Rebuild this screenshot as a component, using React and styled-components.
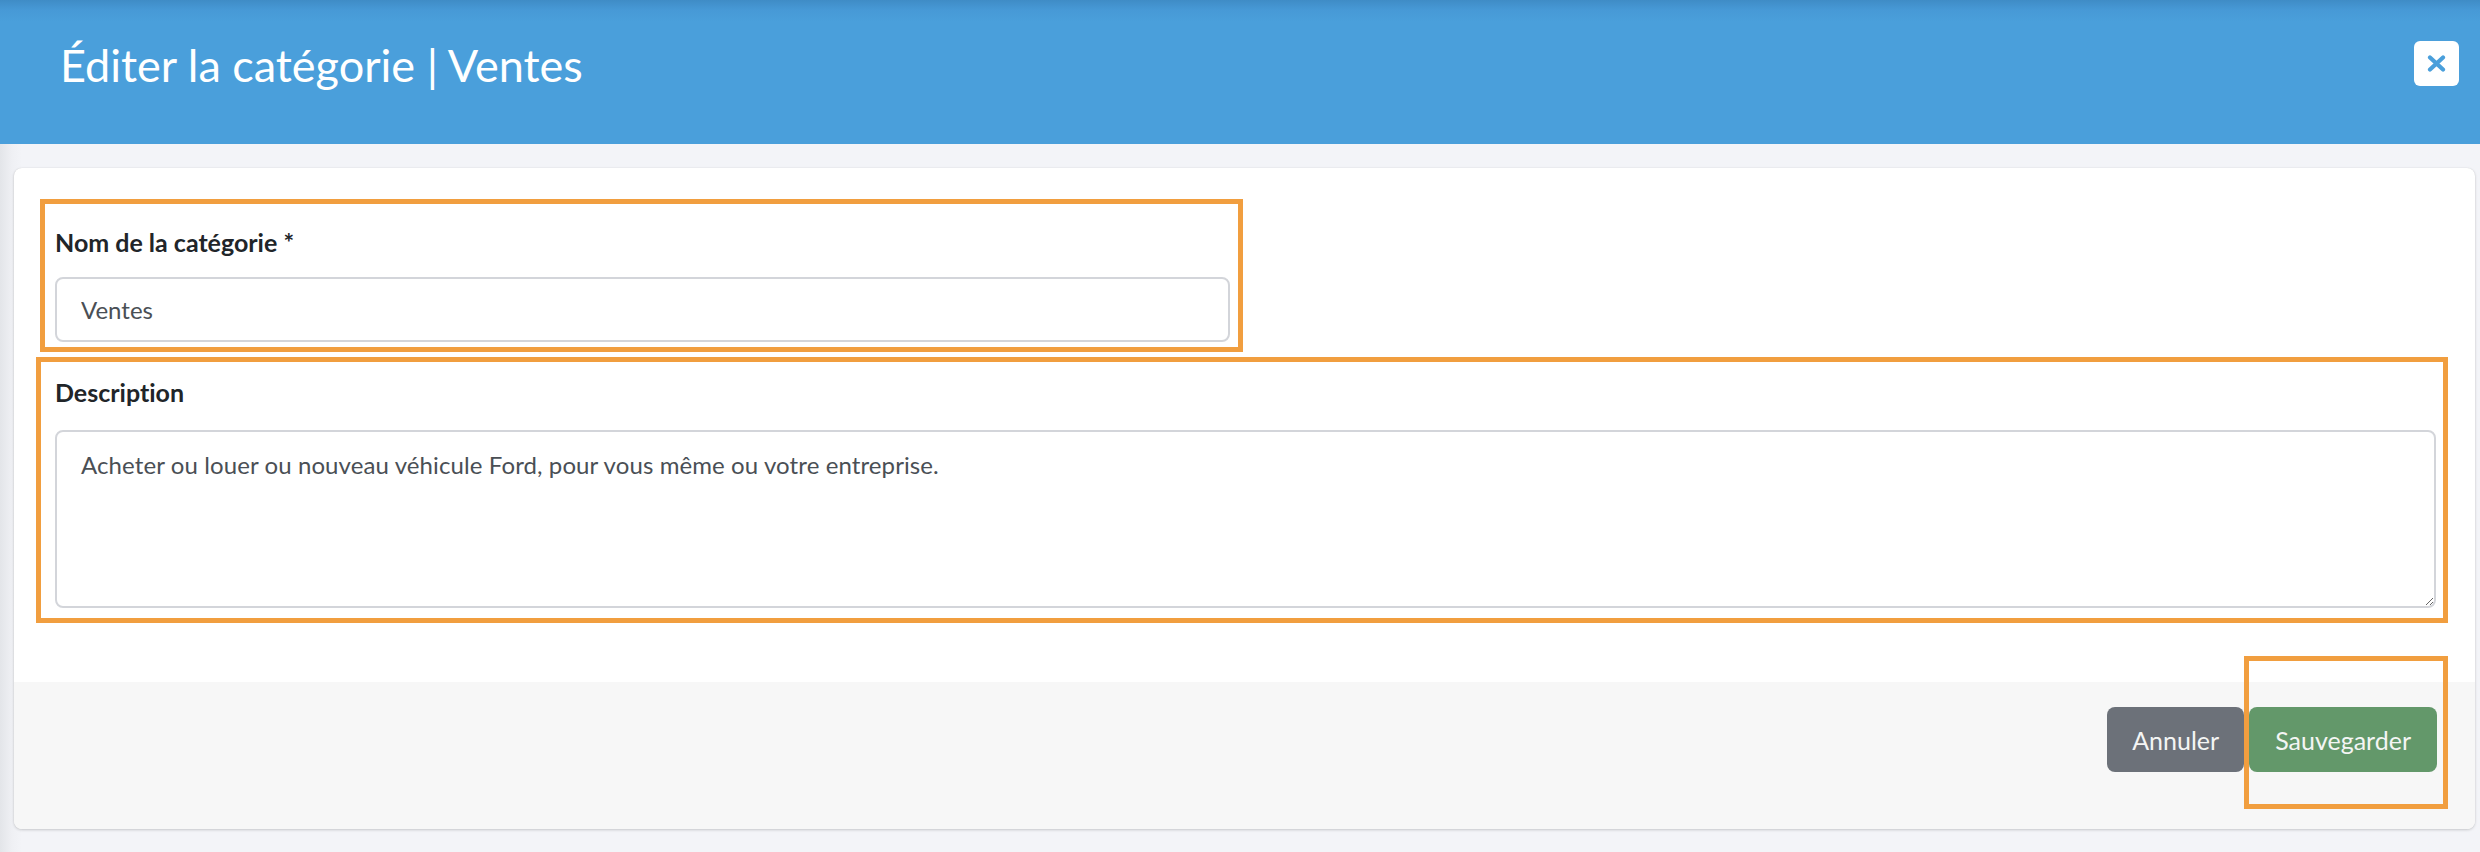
import React from "react";
import styled, { createGlobalStyle } from "styled-components";

const Global = createGlobalStyle`
  html, body { margin: 0; padding: 0; }
  body {
    background: #f3f4f8;
    font-family: Lato, "Open Sans", "Liberation Sans", sans-serif;
    color: #212529;
    font-variant-ligatures: none;
  }
  * { box-sizing: border-box; }
  input, textarea, button { font-variant-ligatures: none; }
`;

const Page = styled.div`
  width: 2480px;
  height: 852px;
  background: linear-gradient(90deg, #e3e5e9 0px, #eff0f4 12px, #f3f4f8 22px);
  overflow: hidden;
`;

const Header = styled.header`
  height: 144px;
  background: linear-gradient(180deg, #3f8cc6 0px, #4799d6 10px, #4a9fdb 22px, #4a9fdb 100%);
  display: flex;
  align-items: center;
  justify-content: space-between;
  padding: 0 21px 0 60px;
`;

const Title = styled.h1`
  margin: 0;
  margin-top: -14px;
  font-weight: 400;
  font-size: 45px;
  color: #ffffff;
`;

const CloseButton = styled.button`
  width: 45px;
  height: 45px;
  border: none;
  border-radius: 6px;
  background: #ffffff;
  display: flex;
  align-items: center;
  justify-content: center;
  padding: 0;
  margin-top: -17px;
  cursor: pointer;
`;

const Main = styled.main`
  padding: 24px 5px 0 14px;
`;

const Card = styled.section`
  background: #ffffff;
  border-radius: 8px;
  box-shadow: 0 1px 3px rgba(0, 0, 0, 0.18), 0 0 1px rgba(0, 0, 0, 0.12);
  position: relative;
`;

const CardBody = styled.div`
  padding: 56px 39px 74px 41px;
  display: flex;
  flex-direction: column;
  gap: 32px;
`;

const FormGroup = styled.div`
  position: relative;
  display: flex;
  flex-direction: column;
  gap: ${(p) => p.$gap}px;
  width: ${(p) => p.$width};
`;

const Highlight = styled.span`
  position: absolute;
  border: 5px solid #f19e3f;
  pointer-events: none;
  top: ${(p) => p.$t}px;
  right: ${(p) => p.$r}px;
  bottom: ${(p) => p.$b}px;
  left: ${(p) => p.$l}px;
`;

const Label = styled.label`
  font-weight: 700;
  font-size: 25px;
  line-height: 36px;
  color: #212529;
`;

const Input = styled.input`
  height: 65px;
  width: 100%;
  border: 2px solid #d3d5da;
  border-radius: 8px;
  padding: 0 24px;
  font-family: inherit;
  font-size: 24px;
  color: #4a4f55;
  background: #fff;
  outline: none;
`;

const TextArea = styled.textarea`
  height: 178px;
  width: 100%;
  border: 2px solid #d3d5da;
  border-radius: 8px;
  padding: 18px 24px;
  font-family: inherit;
  font-size: 24px;
  line-height: 30px;
  letter-spacing: 0.1px;
  color: #4a4f55;
  background: #fff;
  outline: none;
  resize: vertical;
  display: block;
`;

const Footer = styled.footer`
  background: #f7f7f7;
  border-radius: 0 0 8px 8px;
  height: 147px;
  display: flex;
  justify-content: flex-end;
  align-items: flex-start;
  gap: 5px;
  padding: 25px 38px 0 0;
`;

const ButtonWrap = styled.div`
  position: relative;
  display: flex;
`;

const Button = styled.button`
  height: 65px;
  border: none;
  border-radius: 8px;
  padding: 0 ${(p) => p.$px}px;
  font-family: inherit;
  font-size: 25px;
  color: #f4f5f4;
  background: ${(p) => (p.$variant === "primary" ? "#63986a" : "#6c7179")};
  cursor: pointer;
`;

export default function App() {
  return (
    <>
      <Global />
      <Page>
        <Header>
          <Title>Éditer la catégorie | Ventes</Title>
          <CloseButton aria-label="Fermer">
            <svg width="19" height="17" viewBox="0 0 19 17">
              <path
                d="M3 2.5 L16 14.5 M16 2.5 L3 14.5"
                stroke="#4a9fdb"
                strokeWidth="4.2"
                strokeLinecap="round"
              />
            </svg>
          </CloseButton>
        </Header>
        <Main>
          <Card>
            <CardBody>
              <FormGroup $gap={17} $width="1175px">
                <Label>Nom de la catégorie *</Label>
                <Input defaultValue="Ventes" />
                <Highlight $t={-25} $r={-13} $b={-10} $l={-15} />
              </FormGroup>
              <FormGroup $gap={20} $width="100%">
                <Label>Description</Label>
                <TextArea defaultValue="Acheter ou louer ou nouveau véhicule Ford, pour vous même ou votre entreprise." />
                <Highlight $t={-17} $r={-12} $b={-15} $l={-19} />
              </FormGroup>
            </CardBody>
            <Footer>
              <Button $px={25}>Annuler</Button>
              <ButtonWrap>
                <Button $variant="primary" $px={26}>Sauvegarder</Button>
                <Highlight $t={-51} $r={-11} $b={-37} $l={-5} />
              </ButtonWrap>
            </Footer>
          </Card>
        </Main>
      </Page>
    </>
  );
}
